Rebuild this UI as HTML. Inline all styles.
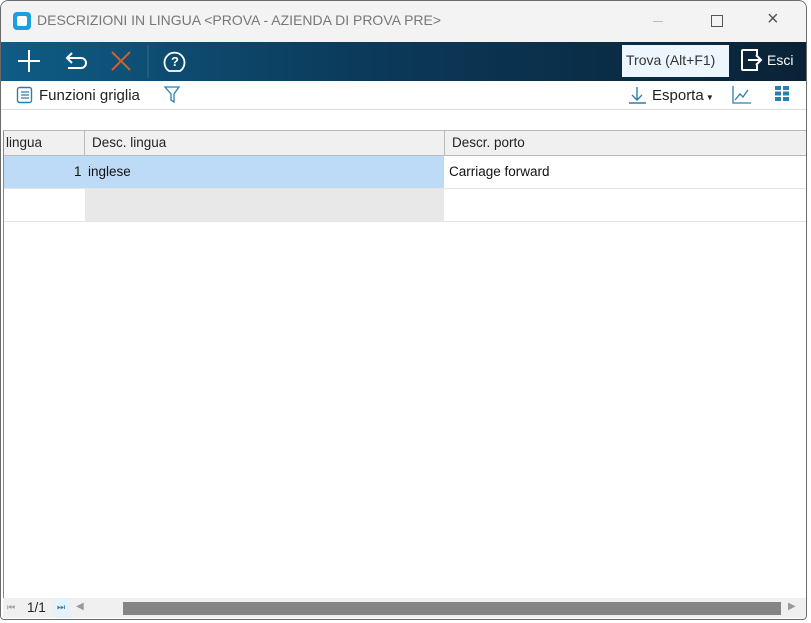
<!DOCTYPE html><html><head><style>
body{margin:0;width:811px;height:623px;overflow:hidden;background:#fff;font-family:"Liberation Sans",sans-serif;position:relative}
.win{position:absolute;left:0;top:0;width:807px;height:620px;overflow:hidden;background:#fff;border-radius:8px 8px 4px 4px}
.bd{position:absolute;left:0;top:0;width:805px;height:618px;border:1px solid #6b6b6b;border-radius:8px 8px 4px 4px}
.t{position:absolute;white-space:nowrap}
</style></head><body><div class="win">
<div style="position:absolute;left:0;top:0;width:807px;height:42px;background:#f3f3f3"></div>
<div style="position:absolute;left:13px;top:12px;width:18px;height:18px;background:#1aa0e0;border-radius:4px"></div>
<div style="position:absolute;left:17px;top:16px;width:10px;height:10px;background:#fff;border-radius:2px"></div>
<div class="t" style="left:37px;top:12px;font-size:14px;color:#777">DESCRIZIONI IN LINGUA &lt;PROVA - AZIENDA DI PROVA PRE&gt;</div>
<div style="position:absolute;left:653px;top:21px;width:10px;height:1px;background:#bbb"></div>
<div style="position:absolute;left:711px;top:15px;width:10px;height:10px;border:1px solid #555"></div>
<div class="t" style="left:767px;top:8px;font-size:20px;color:#555">×</div>
<div style="position:absolute;left:0;top:42px;width:807px;height:39px;background:linear-gradient(90deg,#0f5c85,#0b3a5a 45%,#0a2236)"></div>
<svg style="position:absolute;left:0;top:42px" width="200" height="39"><g stroke="#fff" stroke-width="2" fill="none"><path d="M29 8v22M18 19h22"/><path d="M72 11l-5 5 5 5M67 16h14a5 5 0 0 1 0 10H68"/><path d="M112 10l18 18M130 10l-18 18" stroke="#d2602c"/><path d="M148 3v33" stroke="#3a6b8a" stroke-width="1"/><path d="M176 29h-7a10 10 0 1 1 11 0z" stroke-width="1.8"/></g><text x="171" y="24" fill="#fff" font-size="13" font-weight="bold" font-family="Liberation Sans">?</text></svg>
<div style="position:absolute;left:622px;top:45px;width:107px;height:32px;background:#eef6fd"></div>
<div class="t" style="left:626px;top:52px;font-size:14px;color:#333">Trova (Alt+F1)</div>
<svg style="position:absolute;left:740px;top:48px" width="24" height="24"><path d="M9 2H3a1 1 0 0 0-1 1v18a1 1 0 0 0 1 1h6M2 2h15v5M2 22h15v-5M8 12h13M16 7l5 5-5 5" stroke="#fff" stroke-width="2" fill="none"/></svg>
<div class="t" style="left:767px;top:52px;font-size:14px;color:#fff">Esci</div>
<svg style="position:absolute;left:16px;top:86px" width="18" height="18"><rect x="1.5" y="1.5" width="14" height="15" rx="2" fill="none" stroke="#2b7fb0" stroke-width="1.4"/><path d="M5 6h8M5 9h8M5 12h8" stroke="#2b7fb0" stroke-width="1.2"/></svg>
<div class="t" style="left:39px;top:87px;font-size:15px;color:#222">Funzioni griglia</div>
<svg style="position:absolute;left:163px;top:85px" width="18" height="20"><path d="M2 2h14l-5 7v8l-3-2V9z" fill="none" stroke="#2b7fb0" stroke-width="1.3"/></svg>
<svg style="position:absolute;left:628px;top:86px" width="20" height="18"><path d="M9 1v13M4 9l5 5 5-5M1 17h17" fill="none" stroke="#2b7fb0" stroke-width="1.4"/></svg>
<div class="t" style="left:652px;top:87px;font-size:15px;color:#222">Esporta<span style="font-size:8px"> ▼</span></div>
<svg style="position:absolute;left:731px;top:85px" width="22" height="20"><path d="M2 1v17h18M4 15l5-6 3 3 5-7" fill="none" stroke="#2b7fb0" stroke-width="1.3"/></svg>
<svg style="position:absolute;left:775px;top:86px" width="15" height="15" fill="#2b7fb0"><rect x="0" y="0" width="6" height="4"/><rect x="8" y="0" width="6" height="4"/><rect x="0" y="5.5" width="6" height="4"/><rect x="8" y="5.5" width="6" height="4"/><rect x="0" y="11" width="6" height="4"/><rect x="8" y="11" width="6" height="4"/></svg>
<div style="position:absolute;left:0;top:109px;width:807px;height:1px;background:#ddd"></div>
<div style="position:absolute;left:3px;top:130px;width:803px;height:24px;background:#f0f0f0;border-top:1px solid #bbb;border-bottom:1px solid #bbb"></div>
<div style="position:absolute;left:84px;top:131px;width:1px;height:24px;background:#bbb"></div>
<div style="position:absolute;left:444px;top:131px;width:1px;height:24px;background:#bbb"></div>
<div class="t" style="left:6px;top:135px;font-size:13.5px;color:#222">lingua</div>
<div class="t" style="left:92px;top:135px;font-size:13.5px;color:#222">Desc. lingua</div>
<div class="t" style="left:452px;top:135px;font-size:13.5px;color:#222">Descr. porto</div>
<div style="position:absolute;left:3px;top:156px;width:441px;height:32px;background:#bddbf6"></div>
<div class="t" style="left:74px;top:164px;font-size:13.5px;color:#111">1</div>
<div class="t" style="left:88px;top:164px;font-size:13.5px;color:#111">inglese</div>
<div class="t" style="left:449px;top:164px;font-size:13.5px;color:#111">Carriage forward</div>
<div style="position:absolute;left:3px;top:188px;width:803px;height:1px;background:#e4e4e4"></div>
<div style="position:absolute;left:85px;top:189px;width:359px;height:32px;background:#e8e8e8"></div>
<div style="position:absolute;left:3px;top:221px;width:803px;height:1px;background:#e4e4e4"></div>
<div style="position:absolute;left:3px;top:131px;width:1px;height:468px;background:#888"></div>
<div style="position:absolute;left:3px;top:598px;width:803px;height:20px;background:#f0f0f0"></div>
<div class="t" style="left:7px;top:602px;font-size:9px;color:#999">⏮</div>
<div class="t" style="left:27px;top:600px;font-size:13.5px;color:#222">1/1</div>
<div style="position:absolute;left:54px;top:598px;width:16px;height:20px;background:#e6f2fb"></div>
<div class="t" style="left:57px;top:602px;font-size:9px;color:#2b7fb0">⏭</div>
<div class="t" style="left:76px;top:601px;font-size:10px;color:#999">◀</div>
<div style="position:absolute;left:123px;top:602px;width:658px;height:13px;background:#858585"></div>
<div class="t" style="left:788px;top:601px;font-size:10px;color:#999">▶</div>
<div class="bd"></div>
</div></body></html>
